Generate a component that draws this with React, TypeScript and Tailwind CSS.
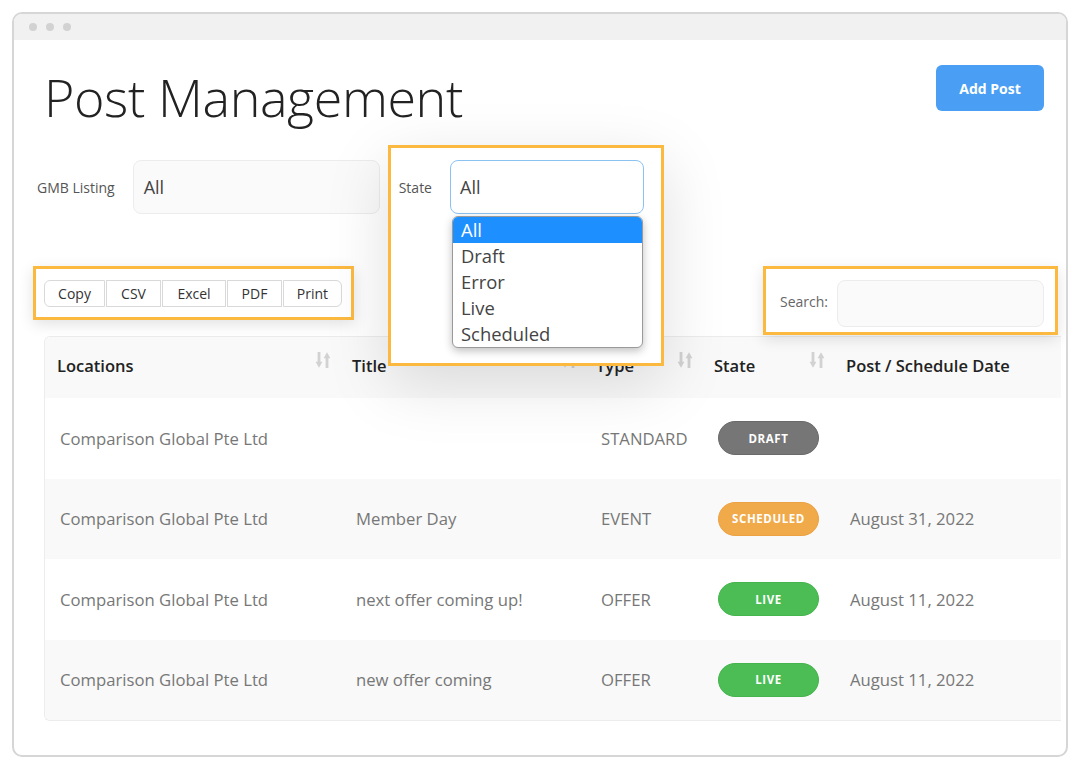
import React from "react";

const rows = [
  { location: "Comparison Global Pte Ltd", title: "", type: "STANDARD", state: "DRAFT", date: "" },
  { location: "Comparison Global Pte Ltd", title: "Member Day", type: "EVENT", state: "SCHEDULED", date: "August 31, 2022" },
  { location: "Comparison Global Pte Ltd", title: "next offer coming up!", type: "OFFER", state: "LIVE", date: "August 11, 2022" },
  { location: "Comparison Global Pte Ltd", title: "new offer coming", type: "OFFER", state: "LIVE", date: "August 11, 2022" },
];

const badgeStyles: Record<string, string> = {
  DRAFT: "bg-[#767676] border-[#6a6a6a]",
  SCHEDULED: "bg-[#f0aa4a] border-[#eba244]",
  LIVE: "bg-[#4cbd55] border-[#45b44e]",
};

function SortIcon() {
  return (
    <svg width="16" height="16" viewBox="0 0 16 16" className="mt-[-12px] shrink-0">
      <rect x="2.6" y="0" width="2.8" height="10.5" fill="#d2d2d2" />
      <polygon points="0.6,9.8 7.4,9.8 4,15.8" fill="#d2d2d2" />
      <polygon points="12,0.2 8.6,6.2 15.4,6.2" fill="#d2d2d2" />
      <rect x="10.6" y="5.5" width="2.8" height="10.5" fill="#d2d2d2" />
    </svg>
  );
}

function HeaderCell({ label, sortable = true, pl = "pl-[12px]" }: { label: string; sortable?: boolean; pl?: string }) {
  return (
    <div className={`flex items-center justify-between pb-[3px] ${pl} pr-[9px]`}>
      <span className="text-[16.5px] font-semibold text-[#222]">{label}</span>
      {sortable && <SortIcon />}
    </div>
  );
}

export default function App() {
  const exportButtons = [
    { label: "Copy", w: "w-[61px]", cls: "rounded-l-[6px]" },
    { label: "CSV", w: "w-[55px]", cls: "" },
    { label: "Excel", w: "w-[64px]", cls: "" },
    { label: "PDF", w: "w-[55px]", cls: "" },
    { label: "Print", w: "w-[59px]", cls: "rounded-r-[6px]" },
  ];

  return (
    <div className="min-h-screen bg-white p-3 font-['Open_Sans',sans-serif]">
      <div className="h-[745px] overflow-hidden rounded-[10px] border-2 border-[#d6d6d6] bg-white">
        {/* window bar */}
        <div className="flex h-[26px] items-center gap-[9px] bg-[#f1f1f1] pl-[15px]">
          <span className="h-[8px] w-[8px] rounded-full bg-[#d2d2d2]" />
          <span className="h-[8px] w-[8px] rounded-full bg-[#d2d2d2]" />
          <span className="h-[8px] w-[8px] rounded-full bg-[#d2d2d2]" />
        </div>

        <div className="pl-[30px] pr-[22px]">
          {/* title row */}
          <div className="flex items-start justify-between pt-[25px]">
            <h1 className="mt-[5px] text-[52px] font-light leading-[54px] tracking-[-0.4px] text-[#222]">Post Management</h1>
            <button className="h-[46px] w-[108px] rounded-[6px] bg-[#4a9ff5] text-[14px] font-bold text-white">
              Add Post
            </button>
          </div>

          {/* filters */}
          <div className="mt-[36px] flex items-center">
            <span className="-ml-[7px] text-[14px] text-[#555]">GMB Listing</span>
            <div className="ml-[18px] flex h-[54px] w-[247px] items-center rounded-[8px] border border-[#ececec] bg-[#fafafa] pl-[10px] text-[18px] text-[#444]">
              All
            </div>

            <div className="relative ml-[19px] flex items-center">
              <div className="absolute -left-[11px] -top-[15px] z-10 h-[221px] w-[276px] border-[3px] border-[#fbb940] bg-white shadow-[0_18px_60px_rgba(0,0,0,0.13)]" />
              <span className="relative z-20 text-[14px] text-[#555]">State</span>
              <div className="relative z-20 ml-[18px]">
                <div className="flex h-[54px] w-[194px] items-center rounded-[8px] border border-[#8cc2f2] bg-white pl-[9px] text-[18px] text-[#444]">
                  All
                </div>
                <div className="absolute left-[2px] top-[56px] w-[191px] overflow-hidden rounded-[6px] border border-[#9a9a9a] bg-white text-[18.4px] leading-[26px] text-[#444] shadow-[0_3px_8px_rgba(0,0,0,0.25)]">
                  <div className="bg-[#1e8fff] pl-[8px] text-white">All</div>
                  <div className="pl-[8px]">Draft</div>
                  <div className="pl-[8px]">Error</div>
                  <div className="pl-[8px]">Live</div>
                  <div className="pl-[8px]">Scheduled</div>
                </div>
              </div>
            </div>
          </div>

          {/* export + search row */}
          <div className="mt-[52px] flex items-start justify-between">
            <div className="-ml-[11px] flex gap-[1px] border-[3px] border-[#fbb940] bg-white pb-[10px] pl-[8px] pr-[9px] pt-[11px] shadow-[0_4px_14px_rgba(0,0,0,0.12)]">
              {exportButtons.map((b) => (
                <button
                  key={b.label}
                  className={`h-[27px] ${b.w} ${b.cls} border border-[#d9d9d9] bg-white text-[14px] text-[#333]`}
                >
                  {b.label}
                </button>
              ))}
            </div>

            <div className="-mr-[14px] flex w-[295px] items-center border-[3px] border-[#fbb940] bg-white pb-[5px] pl-[14px] pr-[11px] pt-[11px] shadow-[0_4px_14px_rgba(0,0,0,0.12)]">
              <span className="-mt-[4px] text-[14px] text-[#666]">Search:</span>
              <div className="ml-[9px] h-[47px] flex-1 rounded-[8px] border border-[#ececec] bg-[#fafafa]" />
            </div>
          </div>

          {/* table */}
          <div className="-mr-[17px] mt-[1px] overflow-hidden rounded-tl-[6px] rounded-bl-[6px] border-b border-l border-t border-[#ececec]">
            <div className="grid h-[61px] grid-cols-[295px_246px_116px_132px_228px] bg-[#f9f9f9]">
              <HeaderCell label="Locations" />
              <HeaderCell label="Title" />
              <HeaderCell label="Type" pl="pl-[10px]" />
              <HeaderCell label="State" />
              <HeaderCell label="Post / Schedule Date" sortable={false} />
            </div>
            {rows.map((r, i) => (
              <div
                key={i}
                className={`grid h-[80.5px] grid-cols-[295px_246px_116px_132px_228px] items-center text-[16.7px] text-[#777] ${
                  i % 2 === 1 ? "bg-[#f9f9f9]" : "bg-white"
                }`}
              >
                <div className="pl-[15px]">{r.location}</div>
                <div className="pl-[16px]">{r.title}</div>
                <div className="pl-[15px]">{r.type}</div>
                <div className="pl-[16px]">
                  <span
                    className={`flex h-[34px] w-[101px] items-center justify-center rounded-full border text-[11.5px] font-bold tracking-[0.6px] text-white ${badgeStyles[r.state]}`}
                  >
                    {r.state}
                  </span>
                </div>
                <div className="pl-[16px]">{r.date}</div>
              </div>
            ))}
          </div>
        </div>
      </div>
    </div>
  );
}
